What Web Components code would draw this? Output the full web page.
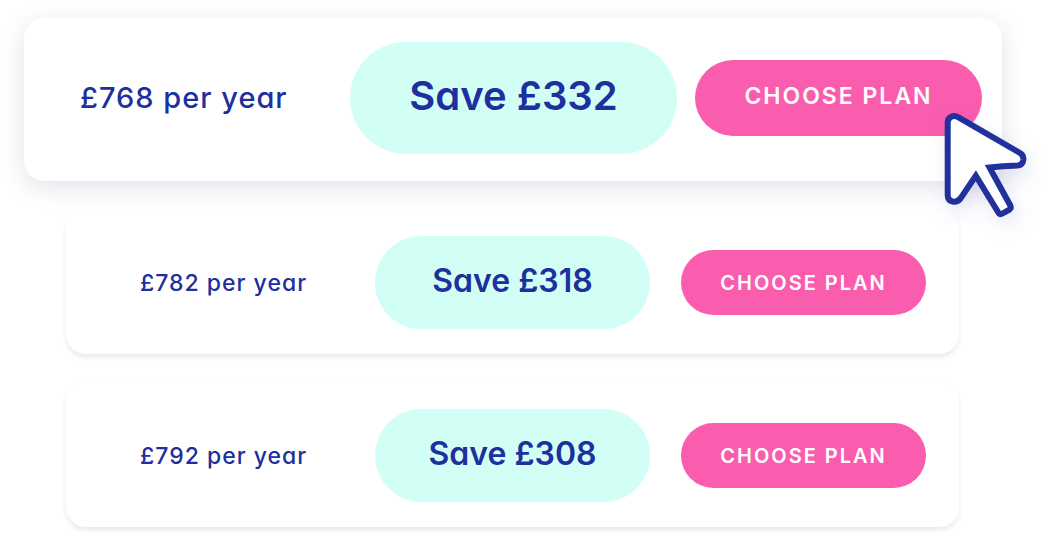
<!DOCTYPE html>
<html lang="en-GB">
<head>
<meta charset="utf-8">
<meta name="viewport" content="width=device-width, initial-scale=1">
<title>Compare plans</title>
<style>
  body { margin: 0; background: #fff; font-family: Inter, Lato, sans-serif; font-feature-settings: "cv11"; color: #202f9e; }
</style>
</head>
<body>
<plan-list>
  <plan-card featured>
    <span slot="price">£768 per year</span>
    <save-badge slot="saving" large>Save £332</save-badge>
    <choose-button slot="action" large>CHOOSE PLAN</choose-button>
    <pointer-cursor slot="pointer"></pointer-cursor>
  </plan-card>
  <plan-card>
    <span slot="price">£782 per year</span>
    <save-badge slot="saving">Save £318</save-badge>
    <choose-button slot="action">CHOOSE PLAN</choose-button>
  </plan-card>
  <plan-card>
    <span slot="price">£792 per year</span>
    <save-badge slot="saving">Save £308</save-badge>
    <choose-button slot="action">CHOOSE PLAN</choose-button>
  </plan-card>
</plan-list>
<script>
  const define = (name, markup) => customElements.define(name, class extends HTMLElement {
    constructor() {
      super();
      this.attachShadow({ mode: 'open' }).innerHTML = markup;
    }
  });

  define('plan-list', `
    <style>
      :host { display: flex; flex-direction: column; gap: 28px; padding: 18px 56px 8px 24px; }
    </style>
    <slot></slot>`);

  define('plan-card', `
    <style>
      :host {
        display: flex; align-items: center; gap: 31px; position: relative;
        margin: 0 43px 0 42px; padding: 27px 33px 25px 74px;
        border-radius: 20px; background: #fff;
        box-shadow: 0 3px 5px rgba(32, 36, 90, .1);
        font-size: 23px; line-height: 32px;
      }
      :host([featured]) {
        z-index: 1; gap: 18px; margin: 0; padding: 24px 20px 27px 56px;
        box-shadow: 0 6px 24px rgba(32, 36, 90, .13);
        font-size: 29px; line-height: 40px;
      }
      .price { flex: 1; font-weight: 500; letter-spacing: 1px; }
    </style>
    <div class="price"><slot name="price"></slot></div>
    <slot name="saving"></slot>
    <slot name="action"></slot>
    <slot name="pointer"></slot>`);

  define('save-badge', `
    <style>
      :host {
        display: flex; align-items: center; justify-content: center; box-sizing: border-box;
        width: 275px; height: 93px; padding-bottom: 4px;
        border-radius: 56px; background: #d1fff5;
        font-size: 32px; line-height: 40px;
      }
      :host([large]) { width: 327px; height: 112px; font-size: 40px; line-height: 52px; }
      strong { font-weight: 600; }
    </style>
    <strong><slot></slot></strong>`);

  define('choose-button', `
    <style>
      :host { display: block; width: 245px; height: 65px; font-size: 20px; }
      :host([large]) { width: 287px; height: 76px; font-size: 23px; }
      button {
        width: 100%; height: 100%; padding: 0; border: 0; border-radius: 38px;
        background: #fb5dae; color: #fff; font: inherit; font-weight: 600;
        letter-spacing: 2px; cursor: pointer;
      }
      :host([large]) button { padding-bottom: 4px; }
    </style>
    <button type="button"><slot></slot></button>`);

  define('pointer-cursor', `
    <style>
      :host { display: block; position: absolute; top: 94px; right: -26px; pointer-events: none; }
      svg { display: block; overflow: visible; filter: drop-shadow(4px 8px 10px rgba(33, 49, 156, .12)); }
    </style>
    <svg width="84" height="106" viewBox="944 112 84 106" aria-hidden="true">
      <path d="M947.7 122.5C947.7 117 953.5 114.5 958.5 117.3L1020 153Q1023.6 155 1023.4 159.5Q1023 165 1017.5 165.5Q1002 165.8 989.5 167.5L1010.3 205.5Q1011.7 208.2 1009 209.8L1002.5 213.5Q999.8 215 998.2 212.2L975.8 175.8L960.5 198.5Q957.5 202.2 953.5 201.7Q947.7 201 947.7 195Z" fill="#fff" stroke="#21319c" stroke-width="6"/>
    </svg>`);
</script>
</body>
</html>
